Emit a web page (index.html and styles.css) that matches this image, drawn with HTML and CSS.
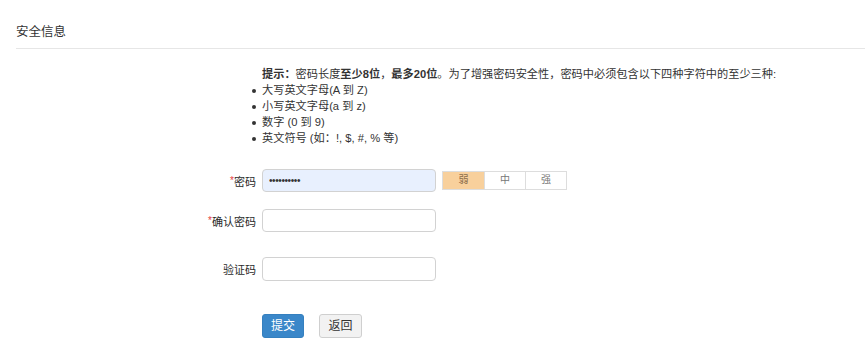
FILE: index.html
```html
<!DOCTYPE html>
<html lang="zh-CN">
<head>
<meta charset="utf-8">
<title>安全信息</title>
<link rel="stylesheet" href="styles.css">
</head>
<body>
<div class="header"><h2 class="title">安全信息</h2></div>
<div class="hint">
  <p class="hint-text"><b>提示：</b>密码长度<b>至少8位</b>，<b>最多20位</b>。为了增强密码安全性，密码中必须包含以下四种字符中的至少三种:</p>
  <ul class="hint-list">
    <li>大写英文字母(A 到 Z)</li>
    <li>小写英文字母(a 到 z)</li>
    <li>数字 (0 到 9)</li>
    <li>英文符号 (如：!, $, #, % 等)</li>
  </ul>
</div>
<form class="form">
  <div class="row row-pwd">
    <label class="label"><span class="req">*</span>密码</label>
    <input class="input input-filled" type="password" value="abcdefghij">
    <div class="strength">
      <span class="level level-on">弱</span><span class="level">中</span><span class="level">强</span>
    </div>
  </div>
  <div class="row row-confirm">
    <label class="label"><span class="req">*</span>确认密码</label>
    <input class="input" type="password">
  </div>
  <div class="row row-code">
    <label class="label">验证码</label>
    <input class="input input-code" type="text">
  </div>
  <div class="row row-actions">
    <span class="label"></span>
    <button type="button" class="btn btn-primary">提交</button>
    <button type="button" class="btn btn-default">返回</button>
  </div>
</form>
</body>
</html>
```
FILE: styles.css
```css
html, body {
  margin: 0;
  padding: 0;
  background: #fff;
}
body {
  font-family: "Liberation Sans", "Noto Sans CJK SC", sans-serif;
  font-size: 11px;
  color: #333;
}
.header {
  margin-left: 16px;
  padding-top: 22px;
  padding-bottom: 6px;
  border-bottom: 1px solid #e6e6e6;
}
.title {
  margin: 0;
  font-size: 12.5px;
  font-weight: normal;
  line-height: 20px;
  color: #333;
}
.hint {
  margin-top: 17px;
  padding-left: 262px;
}
.hint-text {
  margin: 0;
  font-size: 11.2px;
  line-height: 16px;
}
.hint-text b {
  font-weight: bold;
}
.hint-list {
  margin: 0;
  padding-left: 0;
  list-style: none;
  font-size: 11.2px;
}
.hint-list li {
  position: relative;
  line-height: 16px;
}
.hint-list li::before {
  content: "";
  position: absolute;
  left: -10px;
  top: 7px;
  width: 4px;
  height: 4px;
  border-radius: 50%;
  background: #333;
}
.form {
  display: flex;
  flex-direction: column;
}
.row {
  display: flex;
  align-items: center;
}
.row-pwd { margin-top: 23px; }
.row-confirm { margin-top: 17px; }
.row-code { margin-top: 25px; }
.row-actions { margin-top: 33px; }
.label {
  width: 256px;
  margin-right: 6px;
  text-align: right;
  color: #2a2a2a;
  font-size: 11px;
  flex-shrink: 0;
}
.req {
  color: #e4393c;
  font-size: 10px;
  position: relative;
  top: -2px;
}
.input {
  box-sizing: border-box;
  width: 174px;
  height: 23px;
  margin: 0;
  padding: 0 6px;
  border: 1px solid #d2d2d2;
  border-radius: 4px;
  background: #fff;
  font-family: "Liberation Sans", sans-serif;
  font-size: 10px;
  letter-spacing: -0.4px;
  color: #333;
  outline: none;
}
.input-filled {
  background: #e8f0fe;
}
.input-code {
  height: 24px;
}
.strength {
  display: flex;
  margin-left: 6px;
  border: 1px solid #ddd;
}
.level {
  box-sizing: border-box;
  width: 41px;
  height: 17px;
  line-height: 15px;
  text-align: center;
  font-size: 10px;
  color: #777;
  background: #fff;
}
.level + .level {
  border-left: 1px solid #ddd;
}
.level-on {
  background: #f8d09c;
  color: #8a6d4a;
}
.btn {
  box-sizing: border-box;
  height: 24px;
  margin: 0;
  padding: 0;
  border-radius: 3px;
  font-family: "Liberation Sans", "Noto Sans CJK SC", sans-serif;
  font-size: 12px;
  line-height: 22px;
  white-space: nowrap;
  text-align: center;
  cursor: pointer;
}
.btn-primary {
  width: 42px;
  background: #3a87c9;
  border: 1px solid #3580bf;
  color: #fff;
}
.btn-default {
  width: 43px;
  margin-left: 15px;
  background: #f2f2f2;
  border: 1px solid #cfcfcf;
  color: #333;
}
```
